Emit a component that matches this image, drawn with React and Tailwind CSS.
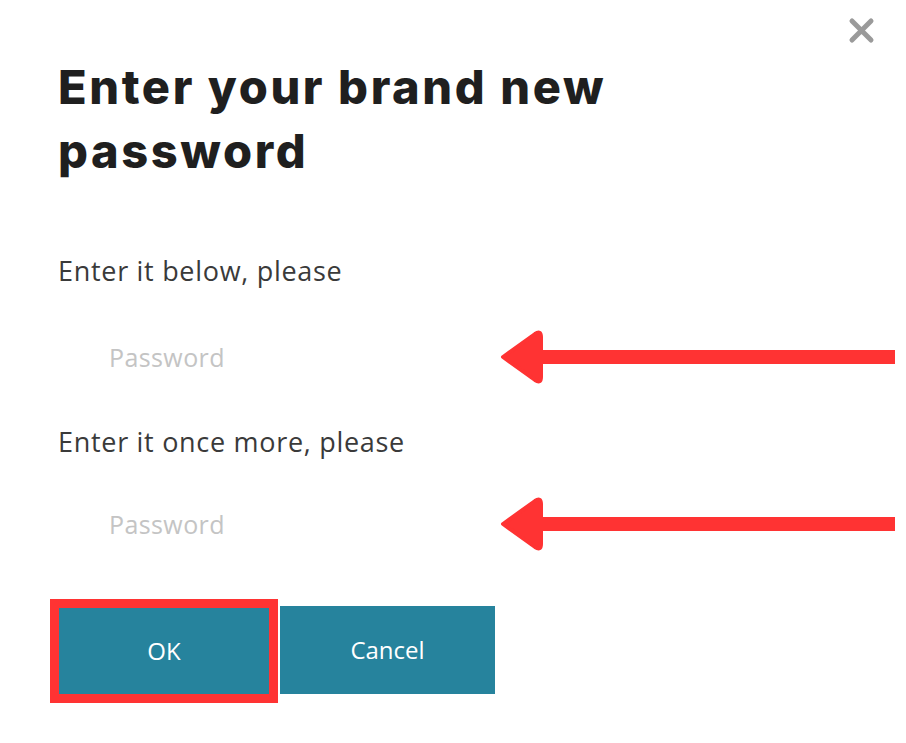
import { useState } from 'react';

function Arrow() {
  // annotation arrow pointing left at the field
  return (
    <svg width="396" height="58" viewBox="0 0 396 58" className="shrink-0">
      <rect x="40" y="22" width="356" height="14" fill="#ff3333" />
      <path
        d="M4 29 L36 6 Q42 2 42 9 L42 49 Q42 56 36 52 Z"
        fill="#ff3333"
        stroke="#ff3333"
        strokeWidth="4"
        strokeLinejoin="round"
      />
    </svg>
  );
}

function PasswordRow({ value, onChange }) {
  return (
    <div className="flex items-center h-[58px]">
      <input
        type="password"
        value={value}
        onChange={onChange}
        placeholder="Password"
        className="w-[441px] h-[58px] pl-[51px] text-[25px] tracking-[0.4px] text-[#555] placeholder:text-[#c4c4c4] outline-none bg-transparent font-['Open_Sans',sans-serif]"
      />
      <Arrow />
    </div>
  );
}

export default function App() {
  const [pw, setPw] = useState('');
  const [pw2, setPw2] = useState('');

  return (
    <div className="relative w-[906px] h-[743px] bg-white overflow-hidden font-['Open_Sans',sans-serif]">
      <button type="button" className="absolute top-[17px] right-[31px] w-[27px] h-[27px] flex items-center justify-center">
        <svg width="27" height="27" viewBox="0 0 27 27">
          <path d="M4 4 L23 23 M23 4 L4 23" stroke="#9a9a9a" strokeWidth="5" strokeLinecap="round" />
        </svg>
      </button>

      <div className="flex flex-col pl-[58px] pt-[55px]">
        <h1 className="font-['Inter',sans-serif] font-extrabold text-[#1f1f1f] text-[47px] leading-[64px] tracking-[2.6px]">
          Enter your brand new
          <br />
          password
        </h1>

        <p className="mt-[72px] text-[27px] leading-[32px] tracking-[0.7px] text-[#3a3a3a]">Enter it below, please</p>
        <div className="mt-[41px]">
          <PasswordRow value={pw} onChange={(e) => setPw(e.target.value)} />
        </div>

        <p className="mt-[40px] text-[27px] leading-[32px] tracking-[0.7px] text-[#3a3a3a]">Enter it once more, please</p>
        <div className="mt-[37px]">
          <PasswordRow value={pw2} onChange={(e) => setPw2(e.target.value)} />
        </div>

        <div className="flex items-start gap-[11px] mt-[53px] ml-[1px]">
          <button
            type="button"
            className="w-[210px] h-[86px] mt-[2px] bg-[#26839d] text-white text-[24px] outline-[9px] outline-solid outline-[#ff3333]"
          >
            OK
          </button>
          <button type="button" className="w-[215px] h-[88px] bg-[#26839d] text-white text-[24px]">
            Cancel
          </button>
        </div>
      </div>
    </div>
  );
}
